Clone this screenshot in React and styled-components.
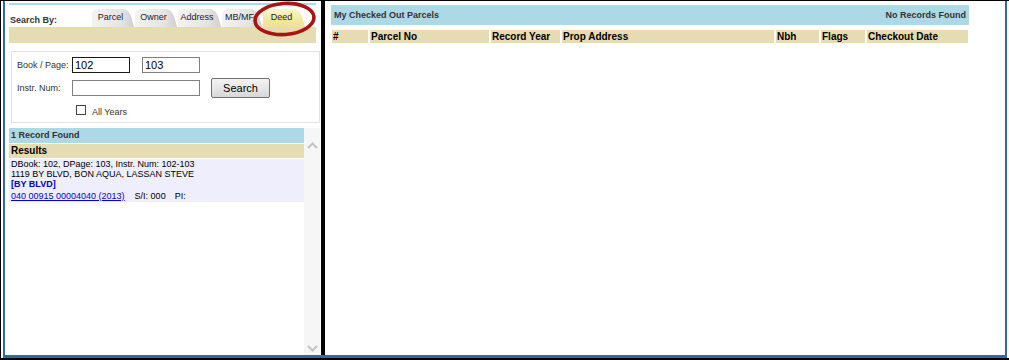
import React from 'react';
import styled, { createGlobalStyle } from 'styled-components';

const Global = createGlobalStyle`
  html, body { margin: 0; padding: 0; background: #fff; }
  body { font-family: "Liberation Sans", Arial, sans-serif; }
`;

const BLUE = '#3566a5';
const LIGHTBLUE = '#add8e6';
const TAN = '#e6dcb1';

const Frame = styled.div`
  width: 1009px;
  height: 360px;
  box-sizing: border-box;
  border-top: 1px solid #000;
  border-left: 1px solid #000;
  border-bottom: 2px solid #000;
  padding-left: 2px;
  background: #fff;
  overflow: hidden;
`;

const Inner = styled.div`
  width: 1004px;
  height: 100%;
  box-sizing: border-box;
  border-left: 2px solid ${BLUE};
  border-right: 2px solid ${BLUE};
  border-bottom: 3px solid ${BLUE};
  display: flex;
`;

const LeftPanel = styled.div`
  width: 316px;
  flex-shrink: 0;
  position: relative;
  display: flex;
  flex-direction: column;
  padding-top: 2px;
  box-sizing: border-box;
`;

const Divider = styled.div`
  width: 4px;
  flex-shrink: 0;
  background: #000;
`;

const RightPanel = styled.div`
  flex: 1;
  padding: 4px 0 0 6px;
  box-sizing: border-box;
`;

const TopLine = styled.div`
  margin-left: 4px;
  width: 307px;
  height: 2px;
  background: ${LIGHTBLUE};
`;

const TabRow = styled.div`
  margin-left: 4px;
  width: 307px;
  height: 22px;
  display: flex;
  align-items: flex-end;
  gap: 1px;
`;

const SearchLabel = styled.div`
  width: 82px;
  flex-shrink: 0;
  padding: 0 0 1px 1px;
  box-sizing: border-box;
  font-size: 9px;
  font-weight: bold;
  line-height: 11px;
  color: #333;
`;

const Tab = styled.div`
  width: ${(p) => p.$w}px;
  height: 18px;
  flex-shrink: 0;
  box-sizing: border-box;
  padding: 3px 5px 0 0;
  text-align: center;
  font-size: 9px;
  line-height: 10px;
  color: #222;
  white-space: nowrap;
  overflow: hidden;
  background: ${(p) =>
    p.$active
      ? 'linear-gradient(#fbf5cf, #f3e7a0 60%, #efe093)'
      : 'linear-gradient(to right, #f3f3f3, #e4e4e4 70%, #cfcfcf)'};
  clip-path: polygon(0 100%, 0 4px, 1px 2px, 3px 0.5px, 6px 0, calc(100% - 10px) 0, calc(100% - 6px) 2px, calc(100% - 3px) 7px, 100% 100%);
`;

const TanBar = styled.div`
  margin-left: 4px;
  width: 307px;
  height: 16px;
  background: ${TAN};
`;

const Ellipse = styled.svg`
  position: absolute;
  left: 246px;
  top: 0;
  width: 70px;
  height: 38px;
  pointer-events: none;
`;

const FormBox = styled.div`
  margin: 8px 1px 0 6px;
  height: 72px;
  box-sizing: border-box;
  border: 1px solid #e2e2e2;
  padding: 5px 0 0 5px;
  display: flex;
  flex-direction: column;
`;

const FormRow = styled.div`
  display: flex;
  align-items: center;
  height: ${(p) => p.$h}px;
  margin-top: ${(p) => p.$mt || 0}px;
  padding-left: ${(p) => p.$pl || 0}px;
`;

const FieldLabel = styled.div`
  width: 55px;
  flex-shrink: 0;
  font-size: 9px;
  color: #333;
  white-space: nowrap;
`;

const TextBox = styled.div`
  width: ${(p) => p.$w}px;
  height: 16px;
  margin-left: ${(p) => p.$ml || 0}px;
  box-sizing: border-box;
  border: 1px solid ${(p) => (p.$focus ? '#1a1a1a' : '#7f7f7f')};
  padding-left: 2px;
  font-size: 11px;
  line-height: 14px;
  color: #000;
  background: #fff;
`;

const Button = styled.div`
  width: 59px;
  height: 20px;
  margin-left: 11px;
  box-sizing: border-box;
  border: 1px solid #707070;
  border-radius: 2px;
  background: linear-gradient(#f4f4f4, #e6e6e6 50%, #d8d8d8);
  font-size: 11px;
  line-height: 18px;
  text-align: center;
  color: #000;
`;

const CheckBox = styled.div`
  width: 10px;
  height: 10px;
  box-sizing: border-box;
  border: 1px solid #444;
  background: #fff;
`;

const CheckLabel = styled.div`
  margin-left: 6px;
  font-size: 9px;
  color: #333;
  padding-top: 3px;
`;

const Results = styled.div`
  margin: 5px 1px 0 4px;
  flex: 1;
  display: flex;
`;

const ResultsContent = styled.div`
  width: 295px;
  flex-shrink: 0;
`;

const ScrollTrack = styled.div`
  width: 16px;
  background: #f6f6f6;
  display: flex;
  flex-direction: column;
  justify-content: space-between;
  align-items: center;
  padding: 14px 0 3px;
  box-sizing: border-box;
`;

const RecordBar = styled.div`
  height: 15px;
  line-height: 15px;
  background: ${LIGHTBLUE};
  padding-left: 2px;
  font-size: 9px;
  font-weight: bold;
  color: #333;
`;

const ResultsBar = styled.div`
  margin-top: 1px;
  height: 14px;
  line-height: 14px;
  background: ${TAN};
  padding-left: 2px;
  font-size: 10px;
  font-weight: bold;
  color: #000;
`;

const ResultsBody = styled.div`
  margin-top: 1px;
  background: #eeeefc;
  padding: 0 2px 1px;
  font-size: 9px;
  line-height: 10px;
  color: #000;
`;

const Line = styled.div`
  margin-top: ${(p) => p.$mt || 0}px;
  white-space: nowrap;
`;

const AreaName = styled.span`
  color: #0000cc;
  font-weight: bold;
`;

const ParcelLink = styled.a`
  color: #0000ee;
  text-decoration: underline;
  margin-right: 10px;
`;

const Gap = styled.span`
  display: inline-block;
  width: ${(p) => p.$w}px;
`;

const HeaderBar = styled.div`
  width: 638px;
  height: 20px;
  box-sizing: border-box;
  background: ${LIGHTBLUE};
  display: flex;
  justify-content: space-between;
  align-items: center;
  padding: 0 3px;
  font-size: 9px;
  font-weight: bold;
  color: #333;
`;

const TableHead = styled.div`
  margin: 5px 0 0 1px;
  width: 636px;
  display: grid;
  grid-template-columns: 36px 119px 69px 212px 43px 44px 1fr;
  column-gap: 2px;
`;

const HeadCell = styled.div`
  height: 13px;
  line-height: 13px;
  background: ${TAN};
  padding-left: 1px;
  font-size: 10px;
  font-weight: bold;
  color: #000;
  white-space: nowrap;
`;

const Chevron = ({ up }) => (
  <svg width="11" height="7" viewBox="0 0 11 7">
    <path
      d={up ? 'M1 6 L5.5 1.5 L10 6' : 'M1 1 L5.5 5.5 L10 1'}
      fill="none"
      stroke="#c4c4c4"
      strokeWidth="2"
    />
  </svg>
);

const tabs = [
  { label: 'Parcel', w: 42 },
  { label: 'Owner', w: 42 },
  { label: 'Address', w: 43 },
  { label: 'MB/MF', w: 40 },
  { label: 'Deed', w: 42, active: true },
];

const columns = ['#', 'Parcel No', 'Record Year', 'Prop Address', 'Nbh', 'Flags', 'Checkout Date'];

export default function App() {
  return (
    <>
      <Global />
      <Frame>
        <Inner>
          <LeftPanel>
            <TopLine />
            <TabRow>
              <SearchLabel>Search By:</SearchLabel>
              {tabs.map((t) => (
                <Tab key={t.label} $w={t.w} $active={t.active}>
                  {t.label}
                </Tab>
              ))}
            </TabRow>
            <TanBar />
            <Ellipse viewBox="0 0 70 38">
              <ellipse
                cx="33.5"
                cy="18"
                rx="29.5"
                ry="15.5"
                fill="none"
                stroke="#ad1212"
                strokeWidth="3.6"
                transform="rotate(-4 33.5 18)"
              />
            </Ellipse>
            <FormBox>
              <FormRow $h={16}>
                <FieldLabel>Book / Page:</FieldLabel>
                <TextBox $w={58} $focus>102</TextBox>
                <TextBox $w={58} $ml={12}>103</TextBox>
              </FormRow>
              <FormRow $h={20} $mt={5}>
                <FieldLabel>Instr. Num:</FieldLabel>
                <TextBox $w={128} />
                <Button>Search</Button>
              </FormRow>
              <FormRow $h={10} $mt={7} $pl={59}>
                <CheckBox />
                <CheckLabel>All Years</CheckLabel>
              </FormRow>
            </FormBox>
            <Results>
              <ResultsContent>
                <RecordBar>1 Record Found</RecordBar>
                <ResultsBar>Results</ResultsBar>
                <ResultsBody>
                  <Line>DBook: 102, DPage: 103, Instr. Num: 102-103</Line>
                  <Line>1119 BY BLVD, BON AQUA, LASSAN STEVE</Line>
                  <Line>
                    <AreaName>[BY BLVD]</AreaName>
                  </Line>
                  <Line $mt={2}>
                    <ParcelLink href="#">040 00915 00004040 (2013)</ParcelLink>
                    S/I: 000<Gap $w={9} />PI:
                  </Line>
                </ResultsBody>
              </ResultsContent>
              <ScrollTrack>
                <Chevron up />
                <Chevron />
              </ScrollTrack>
            </Results>
          </LeftPanel>
          <Divider />
          <RightPanel>
            <HeaderBar>
              <span>My Checked Out Parcels</span>
              <span>No Records Found</span>
            </HeaderBar>
            <TableHead>
              {columns.map((c) => (
                <HeadCell key={c}>{c}</HeadCell>
              ))}
            </TableHead>
          </RightPanel>
        </Inner>
      </Frame>
    </>
  );
}
